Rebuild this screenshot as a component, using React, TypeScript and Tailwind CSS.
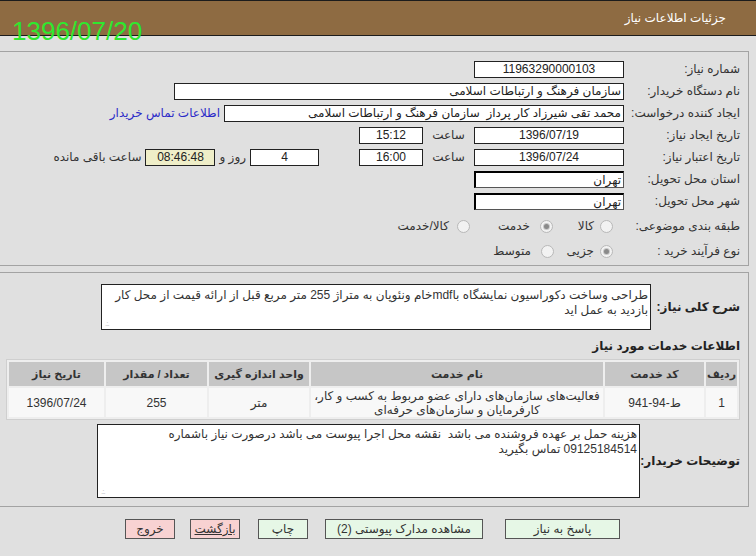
import React from "react";

const Box = ({ w, children, align = "center", inset = false, bg = "bg-white" }: { w: string; children?: React.ReactNode; align?: "center" | "right"; inset?: boolean; bg?: string }) => (
  <div
    className={`${w} h-[17px] ${bg} flex items-center leading-none px-[2px] text-[#222] whitespace-nowrap ${
      align === "center" ? "justify-center" : "justify-start"
    } ${inset ? "border-t-2 border-r border-l-2 border-b border-t-black border-l-black border-r-[#555] border-b-[#555]" : "border border-[#222]"}`}
  >
    {children}
  </div>
);

const Label = ({ children, w = "w-[124px]" }: { children: React.ReactNode; w?: string }) => (
  <div className={`${w} shrink-0 pr-[8px] text-[#333] whitespace-nowrap`}>{children}</div>
);

const Radio = ({ checked = false }: { checked?: boolean }) => (
  <span className="w-[13px] h-[13px] shrink-0 rounded-full border border-[#b8b8b8] bg-[#f2f2f2] flex items-center justify-center">
    {checked && <span className="w-[5px] h-[5px] rounded-full bg-[#8a8a8a] ring-1 ring-[#c8c8c8]" />}
  </span>
);

const Grip = () => (
  <span className="absolute left-[3px] bottom-[1px] text-[8px] leading-none text-[#bdbdbd] tracking-[-1px]">.:.</span>
);

export default function App() {
  return (
    <div
      dir="rtl"
      className="relative w-[756px] h-[556px] overflow-hidden bg-[#e0e0e0] text-[12px] font-['Liberation_Sans','DejaVu_Sans',sans-serif]"
    >
      {/* header */}
      <div className="h-[36px] bg-[#8e6b42] border-t border-b border-[#1c1c1c] flex items-center pr-[30px] text-white">
        جزئیات اطلاعات نیاز
      </div>
      <div dir="ltr" className="absolute left-[12px] top-[18px] text-[26px] leading-none text-[#2ee82e]">
        1396/07/20
      </div>

      {/* panel 1 */}
      <div className="mt-[15px] mr-[7px] border-t border-r border-b border-[#a3a3a3] pt-[6px] pb-[3px]">
        <div className="h-[22px] flex items-center">
          <Label>شماره نیاز:</Label>
          <Box w="w-[150px]">11963290000103</Box>
        </div>
        <div className="h-[22px] flex items-center">
          <Label>نام دستگاه خریدار:</Label>
          <Box w="w-[450px]" align="right">سازمان فرهنگ و ارتباطات اسلامی</Box>
        </div>
        <div className="h-[22px] flex items-center">
          <Label>ایجاد کننده درخواست:</Label>
          <Box w="w-[400px]" align="right">محمد تقی شیرزاد کار پرداز&nbsp; سازمان فرهنگ و ارتباطات اسلامی</Box>
          <span className="mr-[4px] text-[#2b2bc8] whitespace-nowrap">اطلاعات تماس خریدار</span>
        </div>
        <div className="h-[22px] flex items-center">
          <Label>تاریخ ایجاد نیاز:</Label>
          <Box w="w-[150px]">1396/07/19</Box>
          <div className="w-[51px] text-center text-[#333]">ساعت</div>
          <Box w="w-[64px]">15:12</Box>
        </div>
        <div className="h-[22px] flex items-center">
          <Label>تاریخ اعتبار نیاز:</Label>
          <Box w="w-[150px]">1396/07/24</Box>
          <div className="w-[51px] text-center text-[#333]">ساعت</div>
          <Box w="w-[64px]">16:00</Box>
          <div className="w-[40px]" />
          <Box w="w-[69px]">4</Box>
          <span className="mx-[4px] text-[#333] whitespace-nowrap">روز و</span>
          <Box w="w-[70px]" bg="bg-[#efeec8]">08:46:48</Box>
          <span className="mr-[4px] text-[#333] whitespace-nowrap">ساعت باقی مانده</span>
        </div>
        <div className="h-[22px] flex items-center">
          <Label>استان محل تحویل:</Label>
          <Box w="w-[150px]" align="right" inset>تهران</Box>
        </div>
        <div className="h-[22px] flex items-center">
          <Label>شهر محل تحویل:</Label>
          <Box w="w-[150px]" align="right" inset>تهران</Box>
        </div>
        <div className="h-[28px] flex items-center">
          <Label>طبقه بندی موضوعی:</Label>
          <div className="w-[70px] pr-[11px] flex items-center gap-[6px]">
            <Radio />
            <span className="text-[#333]">کالا</span>
          </div>
          <div className="w-[84px] pr-[1px] flex items-center gap-[10px]">
            <Radio checked />
            <span className="text-[#333]">خدمت</span>
          </div>
          <div className="flex items-center gap-[8px]">
            <Radio />
            <span className="text-[#333]">کالا/خدمت</span>
          </div>
        </div>
        <div className="h-[22px] flex items-center">
          <Label>نوع فرآیند خرید :</Label>
          <div className="w-[70px] pr-[11px] flex items-center gap-[6px]">
            <Radio checked />
            <span className="text-[#333]">جزیی</span>
          </div>
          <div className="flex items-center gap-[10px]">
            <Radio />
            <span className="text-[#333]">متوسط</span>
          </div>
        </div>
      </div>

      {/* panel 2 */}
      <div className="mt-[6px] mr-[7px] border-t border-r border-b border-[#a3a3a3] pt-[11px] pb-[8px]">
        <div className="flex items-center">
          <div className="w-[97px] shrink-0 pr-[8px] font-bold text-[12px] text-[#222] whitespace-nowrap">شرح کلی نیاز:</div>
          <div className="relative w-[550px] h-[46px] bg-white border border-[#222] px-[2px] pt-[3px] leading-[15px] text-[#333]">
            طراحی وساخت دکوراسیون نمایشگاه باmdfخام ونئوپان به متراژ 255 متر مربع قبل از ارائه قیمت از محل کار بازدید به عمل اید
            <Grip />
          </div>
        </div>

        <div className="mt-[8px] h-[16px] pr-[8px] font-bold text-[12px] leading-[16px] text-[#222]">اطلاعات خدمات مورد نیاز</div>

        <div className="mt-[5px] mr-[8px] ml-[6px] border border-[#cfcfcf]">
          <table className="w-full table-fixed border-separate border-spacing-[2px] bg-[#eeeeee] text-[#333]">
            <colgroup>
              <col className="w-[31px]" />
              <col className="w-[99px]" />
              <col className="w-[292px]" />
              <col className="w-[100px]" />
              <col className="w-[101px]" />
              <col />
            </colgroup>
            <thead>
              <tr className="h-[24px] bg-[#c6c6c6] text-[11px]">
                <th className="font-bold px-0 whitespace-nowrap">ردیف</th>
                <th className="font-bold">کد خدمت</th>
                <th className="font-bold">نام خدمت</th>
                <th className="font-bold">واحد اندازه گیری</th>
                <th className="font-bold">تعداد / مقدار</th>
                <th className="font-bold">تاریخ نیاز</th>
              </tr>
            </thead>
            <tbody>
              <tr className="h-[29px] bg-[#f8f8f8] text-center">
                <td>1</td>
                <td>ط-94-941</td>
                <td className="leading-[14px]">
                  فعالیت‌های سازمان‌های دارای عضو مربوط به کسب و کار،
                  <br />
                  کارفرمایان و سازمان‌های حرفه‌ای
                </td>
                <td>متر</td>
                <td>255</td>
                <td>1396/07/24</td>
              </tr>
            </tbody>
          </table>
        </div>

        <div className="mt-[4px] flex items-center">
          <div className="w-[108px] shrink-0 pr-[8px] font-bold text-[12px] text-[#222] whitespace-nowrap">توضیحات خریدار:</div>
          <div className="relative w-[543px] h-[74px] bg-white border border-[#222] px-[2px] pt-[2px] leading-[15px] text-[#333]">
            هزینه حمل بر عهده فروشنده می باشد&nbsp; نقشه محل اجرا پیوست می باشد درصورت نیاز باشماره 09125184514 تماس بگیرید
            <Grip />
          </div>
        </div>
      </div>

      {/* buttons */}
      <div className="mt-[12px] pr-[136px] flex items-center text-[#333]">
        <button className="w-[115px] h-[20px] bg-[#e6f7e6] border border-[#555] leading-none">پاسخ به نیاز</button>
        <button className="mr-[22px] w-[158px] h-[20px] bg-[#e6f7e6] border border-[#555] leading-none">مشاهده مدارک پیوستی (2)</button>
        <button className="mr-[17px] w-[50px] h-[20px] bg-[#e6f7e6] border border-[#555] leading-none">چاپ</button>
        <button className="mr-[18px] w-[50px] h-[20px] bg-[#f8d2d2] border border-[#555] leading-none underline">بازگشت</button>
        <button className="mr-[15px] w-[50px] h-[20px] bg-[#f8d2d2] border border-[#555] leading-none">خروج</button>
      </div>
    </div>
  );
}
